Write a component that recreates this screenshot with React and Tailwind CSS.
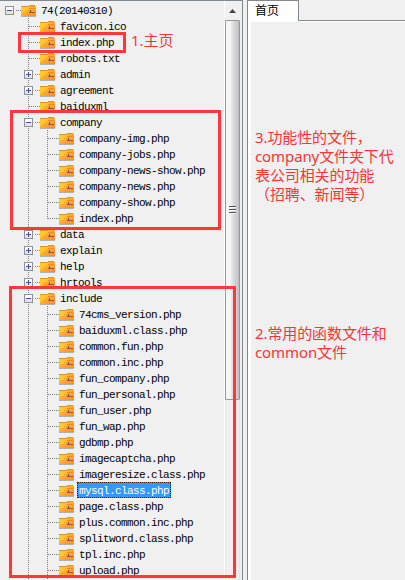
const child = (name, last) => ({ level: 2, name, last });
const top = (name, toggle) => ({ level: 1, name, toggle });

const rows = [
  { level: 0, name: '74(20140310)', toggle: '-' },
  top('favicon.ico'),
  top('index.php'),
  top('robots.txt'),
  top('admin', '+'),
  top('agreement', '+'),
  top('baiduxml'),
  top('company', '-'),
  child('company-img.php'),
  child('company-jobs.php'),
  child('company-news-show.php'),
  child('company-news.php'),
  child('company-show.php'),
  child('index.php', true),
  top('data', '+'),
  top('explain', '+'),
  top('help', '+'),
  top('hrtools', '+'),
  top('include', '-'),
  child('74cms_version.php'),
  child('baiduxml.class.php'),
  child('common.fun.php'),
  child('common.inc.php'),
  child('fun_company.php'),
  child('fun_personal.php'),
  child('fun_user.php'),
  child('fun_wap.php'),
  child('gdbmp.php'),
  child('imagecaptcha.php'),
  child('imageresize.class.php'),
  { ...child('mysql.class.php'), selected: true },
  child('page.class.php'),
  child('plus.common.inc.php'),
  child('splitword.class.php'),
  child('tpl.inc.php'),
  child('upload.php'),
];

function Branch({ level, toggle, last }) {
  const x = level * 19 + 9.5;
  const w = level * 19 + 21;
  const line = { stroke: '#808080', strokeDasharray: '1 1' };
  return (
    <svg width={w} height="16" viewBox={`0 0 ${w} 16`} shapeRendering="crispEdges" className="shrink-0">
      {level > 0 && <path d="M28.5 0V16" {...line} />}
      {level > 1 && <path d={last ? 'M47.5 0V9' : 'M47.5 0V16'} {...line} />}
      <path d={`M${x + 0.5} 8.5H${w}`} {...line} />
      {toggle && (
        <g>
          <rect x={x - 5.5} y="3" width="11" height="11" fill="#f0f0f0" />
          <rect x={x - 4} y="4.5" width="8" height="8" rx="1" fill="#fafafa" stroke="#919191" />
          <rect x={x - 3.5} y="9" width="7" height="3" fill="#e4e4e4" />
          <path d={`M${x - 2.5} 8.5H${x + 2.5}`} stroke="#3c50a8" />
          {toggle === '+' && <path d={`M${x} 6V11`} stroke="#3c50a8" />}
        </g>
      )}
    </svg>
  );
}

function Folder() {
  return (
    <svg width="15" height="12" viewBox="0 0 15 12" className="mt-0.5 shrink-0" shapeRendering="crispEdges">
      <defs>
        <linearGradient id="folder" x1="0" y1="0" x2="1" y2="1">
          <stop offset="0" stopColor="#ffc627" />
          <stop offset="0.45" stopColor="#ffae2c" />
          <stop offset="1" stopColor="#ff8b24" />
        </linearGradient>
      </defs>
      <rect y="11" width="15" height="1" fill="#b3b3b3" />
      <path d="M0 1H8V0H14V1H15V11H0Z" fill="url(#folder)" />
      <path d="M0 1H8V2H0ZM8 0H14V1H8Z" fill="#dc9426" />
      <path d="M0 2H8L5 6L0 9Z" fill="#ffd42e" opacity="0.65" />
      <path d="M9 5H10V8H9Z" fill="#7c4a18" />
      <path d="M8 7.5H14" stroke="#9c5a20" />
      <path d="M8 3.5H14" stroke="#e58f28" />
    </svg>
  );
}

function TreeRow({ level, name, toggle, last, selected }) {
  return (
    <div className="flex h-4 shrink-0 items-center">
      <Branch level={level} toggle={toggle} last={last} />
      <Folder />
      <span
        className={
          'ml-[3px] h-4 whitespace-pre px-[2px] text-[11px] leading-[18px] tracking-[-0.6px] ' +
          (selected ? 'bg-[#3399ff] text-white outline-1 -outline-offset-1 outline-dotted outline-[#3a2000]' : 'text-black')
        }
      >
        {name}
      </span>
    </div>
  );
}

function Scrollbar() {
  return (
    <div className="flex w-[18px] shrink-0 flex-col items-start border-l border-white bg-[#f0f0f0]">
      <div className="flex h-[19px] w-[15px] shrink-0 items-center justify-center">
        <svg width="7" height="4" viewBox="0 0 7 4">
          <path d="M3.5 0L7 4H0Z" fill="#444" />
        </svg>
      </div>
      <div className="flex h-[380px] w-[15px] shrink-0 items-center justify-center rounded-[1px] border border-[#979797] bg-linear-to-r from-[#f5f5f5] from-30% via-[#dcdcdc] via-55% to-[#c0c0c4]">
        <svg width="7" height="8" viewBox="0 0 7 8" shapeRendering="crispEdges">
          <path d="M0 .5H7M0 3.5H7M0 6.5H7" stroke="#505458" />
          <path d="M0 1.5H7M0 4.5H7M0 7.5H7" stroke="#f5f5f5" />
        </svg>
      </div>
      <div className="w-[15px] grow border-x border-[#e6e6e6]" />
    </div>
  );
}

const note =
  "absolute whitespace-nowrap font-['Noto_Sans','Noto_Sans_CJK_SC',sans-serif] text-[15px] leading-[19px] font-normal text-[#ff3333]";
const frame = 'absolute border-3 border-[#ff3737]';

export default function App() {
  return (
    <div className="relative flex h-[580px] w-[405px] overflow-hidden bg-[#f0f0f0]">
      <aside className="flex h-full w-[243px] shrink-0 border-t border-r border-[#828790]">
        <div className="flex min-w-0 grow flex-col overflow-hidden pt-px font-['Liberation_Mono',monospace]">
          {rows.map((row, i) => (
            <TreeRow key={i} {...row} />
          ))}
          <svg width="50" height="2" shapeRendering="crispEdges" className="shrink-0">
            <path d="M28.5 0V2M47.5 0V2" stroke="#808080" strokeDasharray="1 1" />
          </svg>
        </div>
        <Scrollbar />
      </aside>

      <main className="ml-1 flex min-w-0 grow flex-col">
        <div className="flex h-[21px] shrink-0">
          <div className="w-[52px] border-x border-t border-[#828790] bg-white pl-[7px] font-['Noto_Sans_CJK_SC',sans-serif] text-[12px] leading-[18px] text-black">
            首页
          </div>
          <div className="grow border-b border-[#828790]" />
        </div>
        <div className="grow border-l border-[#828790] bg-white pt-px pl-[3px]">
          <div className="h-full bg-[#f0f0f0]" />
        </div>
      </main>

      <div className={`${frame} top-[32px] left-[18px] h-[21px] w-[108px]`} />
      <div className={`${frame} top-[110px] left-[10px] h-[120px] w-[211px]`} />
      <div className={`${frame} top-[286px] left-[9px] h-[292px] w-[227px]`} />

      <p className={`${note} top-[31px] left-[131px]`}>1.主页</p>
      <p className={`${note} top-[128px] left-[255px] tracking-[-0.1px]`}>
        3.功能性的文件，
        <br />
        company文件夹下代
        <br />
        表公司相关的功能
        <br />
        （招聘、新闻等）
      </p>
      <p className={`${note} top-[324px] left-[255px] tracking-[-0.1px]`}>
        2.常用的函数文件和
        <br />
        common文件
      </p>
    </div>
  );
}
